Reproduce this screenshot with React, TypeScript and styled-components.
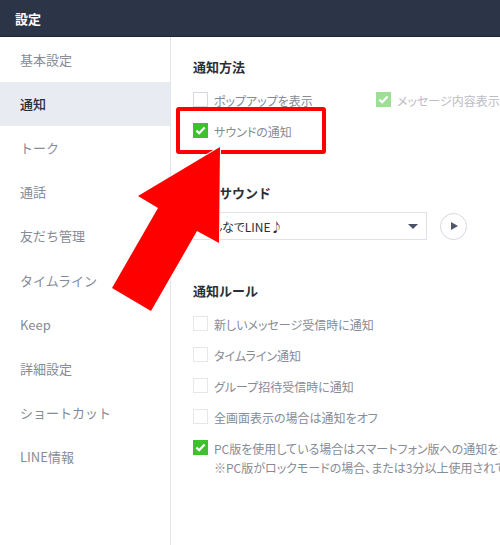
import React from "react";
import styled, { createGlobalStyle } from "styled-components";

const Global = createGlobalStyle`
  html, body { margin: 0; padding: 0; background: #fff; }
  body { font-family: "Noto Sans CJK JP", "Noto Sans", sans-serif; }
`;

const Page = styled.div`
  position: relative;
  width: 500px;
  height: 545px;
  overflow: hidden;
  display: flex;
  flex-direction: column;
  background: #fff;
`;

const TitleBar = styled.header`
  height: 37px;
  flex: none;
  box-sizing: border-box;
  padding-left: 15px;
  display: flex;
  align-items: center;
  background: #2c3447;
  border-bottom: 1px solid #20252f;
  color: #fff;
  font-size: 13px;
  font-weight: 700;
`;

const Body = styled.div`
  flex: 1;
  display: flex;
  min-height: 0;
`;

const Sidebar = styled.nav`
  width: 171px;
  flex: none;
  box-sizing: border-box;
  padding-top: 1px;
  border-right: 1px solid #e3e5ec;
`;

const NavItem = styled.div<{ $active?: boolean }>`
  height: 44.2px;
  box-sizing: border-box;
  padding: 0 0 2px 20px;
  display: flex;
  align-items: center;
  font-size: 13px;
  color: ${(p) => (p.$active ? "#2a2e37" : "#868b96")};
  background: ${(p) => (p.$active ? "#e8ebf1" : "transparent")};
  font-weight: ${(p) => (p.$active ? 500 : 400)};
`;

const Content = styled.main`
  flex: 1;
  min-width: 0;
  padding: 19px 0 0 22px;
  overflow: hidden;
`;

const Section = styled.section<{ $gap?: number }>`
  margin-bottom: ${(p) => p.$gap ?? 0}px;
`;

const Heading = styled.h2`
  margin: 0;
  height: 22px;
  line-height: 22px;
  font-size: 13px;
  font-weight: 700;
  color: #2a2e37;
  white-space: nowrap;
`;

const CheckRows = styled.div<{ $pitch: number; $top: number }>`
  display: flex;
  flex-direction: column;
  gap: ${(p) => p.$pitch}px;
  margin-top: ${(p) => p.$top}px;
`;

const Row = styled.div`
  display: flex;
  align-items: flex-start;
  height: 16px;
  white-space: nowrap;
`;

const Box = styled.span<{ $checked?: boolean; $faded?: boolean; $strong?: boolean }>`
  width: 15px;
  height: 15px;
  flex: none;
  box-sizing: border-box;
  margin-right: 6px;
  display: flex;
  align-items: center;
  justify-content: center;
  background: ${(p) => (p.$checked ? "#3fc02f" : "#fff")};
  border: ${(p) => (p.$checked ? "none" : `1px solid ${p.$strong ? "#d5d8de" : "#e6e7ea"}`)};
  opacity: ${(p) => (p.$faded ? 0.5 : 1)};
`;

const Label = styled.span<{ $faded?: boolean }>`
  font-size: 12px;
  line-height: 17px;
  color: ${(p) => (p.$faded ? "#b9bcc3" : "#868b96")};
  font-feature-settings: "palt";
`;

const Stack = styled.div`
  display: flex;
  flex-direction: column;
  gap: 2px;
`;

const Spaced = styled.div`
  display: flex;
  width: 400px;
  height: 16px;
`;

const Half = styled.div`
  display: flex;
  align-items: flex-start;
  width: 183px;
  flex: none;
`;

const SoundRow = styled.div`
  display: flex;
  align-items: center;
  gap: 13px;
  margin-top: 8px;
`;

const Select = styled.div`
  width: 234px;
  height: 28px;
  box-sizing: border-box;
  padding: 0 8px 0 5px;
  border: 1px solid #dfe2e8;
  display: flex;
  align-items: center;
  justify-content: space-between;
  font-size: 12px;
  color: #2a2e37;
  font-feature-settings: "palt";
`;

const Caret = styled.span`
  width: 0;
  height: 0;
  border-left: 5px solid transparent;
  border-right: 5px solid transparent;
  border-top: 5px solid #4a5166;
`;

const PlayButton = styled.button`
  width: 27px;
  height: 27px;
  padding: 0 0 0 2px;
  box-sizing: border-box;
  border: 1px solid #d5d8e0;
  border-radius: 50%;
  background: #fff;
  display: flex;
  align-items: center;
  justify-content: center;
`;

const PlayGlyph = styled.span`
  width: 0;
  height: 0;
  border-top: 4px solid transparent;
  border-bottom: 4px solid transparent;
  border-left: 7px solid #4f566b;
`;

const Highlight = styled.div`
  position: absolute;
  left: 176px;
  top: 107px;
  width: 150px;
  height: 47px;
  box-sizing: border-box;
  border: 4px solid #f00;
  border-radius: 3px;
`;

const ArrowSvg = styled.svg`
  position: absolute;
  left: 0;
  top: 0;
  pointer-events: none;
`;

const Tick = () => (
  <svg width="11" height="9" viewBox="0 0 11 9">
    <path d="M1.4 4.6 4.2 7.2 9.6 1.6" fill="none" stroke="#fff" strokeWidth="2.2" />
  </svg>
);

const navItems = ["基本設定", "通知", "トーク", "通話", "友だち管理", "タイムライン", "Keep", "詳細設定", "ショートカット", "LINE情報"];
const rules = ["新しいメッセージ受信時に通知", "タイムライン通知", "グループ招待受信時に通知", "全画面表示の場合は通知をオフ"];

export default function App() {
  return (
    <Page>
      <Global />
      <TitleBar>設定</TitleBar>
      <Body>
        <Sidebar>
          {navItems.map((n) => (
            <NavItem key={n} $active={n === "通知"}>{n}</NavItem>
          ))}
        </Sidebar>
        <Content>
          <Section $gap={43}>
            <Heading>通知方法</Heading>
            <CheckRows $pitch={15} $top={14}>
              <Spaced>
                <Half>
                  <Box $strong />
                  <Label>ポップアップを表示</Label>
                </Half>
                <Half>
                  <Box $checked $faded><Tick /></Box>
                  <Label $faded>メッセージ内容表示</Label>
                </Half>
              </Spaced>
              <Row>
                <Box $checked><Tick /></Box>
                <Label>サウンドの通知</Label>
              </Row>
            </CheckRows>
          </Section>
          <Section $gap={40}>
            <Heading>通知サウンド</Heading>
            <SoundRow>
              <Select>
                <span>みんなでLINE♪</span>
                <Caret />
              </Select>
              <PlayButton aria-label="再生"><PlayGlyph /></PlayButton>
            </SoundRow>
          </Section>
          <Section>
            <Heading>通知ルール</Heading>
            <CheckRows $pitch={15} $top={14}>
              {rules.map((r) => (
                <Row key={r}>
                  <Box />
                  <Label>{r}</Label>
                </Row>
              ))}
              <Row>
                <Box $checked><Tick /></Box>
                <Stack>
                  <Label>PC版を使用している場合はスマートフォン版への通知をオフ</Label>
                  <Label>※PC版がロックモードの場合、または3分以上使用されていない場合</Label>
                </Stack>
              </Row>
            </CheckRows>
          </Section>
        </Content>
      </Body>
      <Highlight />
      <ArrowSvg width="500" height="545" viewBox="0 0 500 545">
        <polygon
          points="220,147 138,196 158,208 112,288 151,311 197,231 219,243"
          fill="#f00"
          stroke="#fff"
          strokeWidth="2"
          strokeLinejoin="miter"
          paintOrder="stroke"
        />
      </ArrowSvg>
    </Page>
  );
}
